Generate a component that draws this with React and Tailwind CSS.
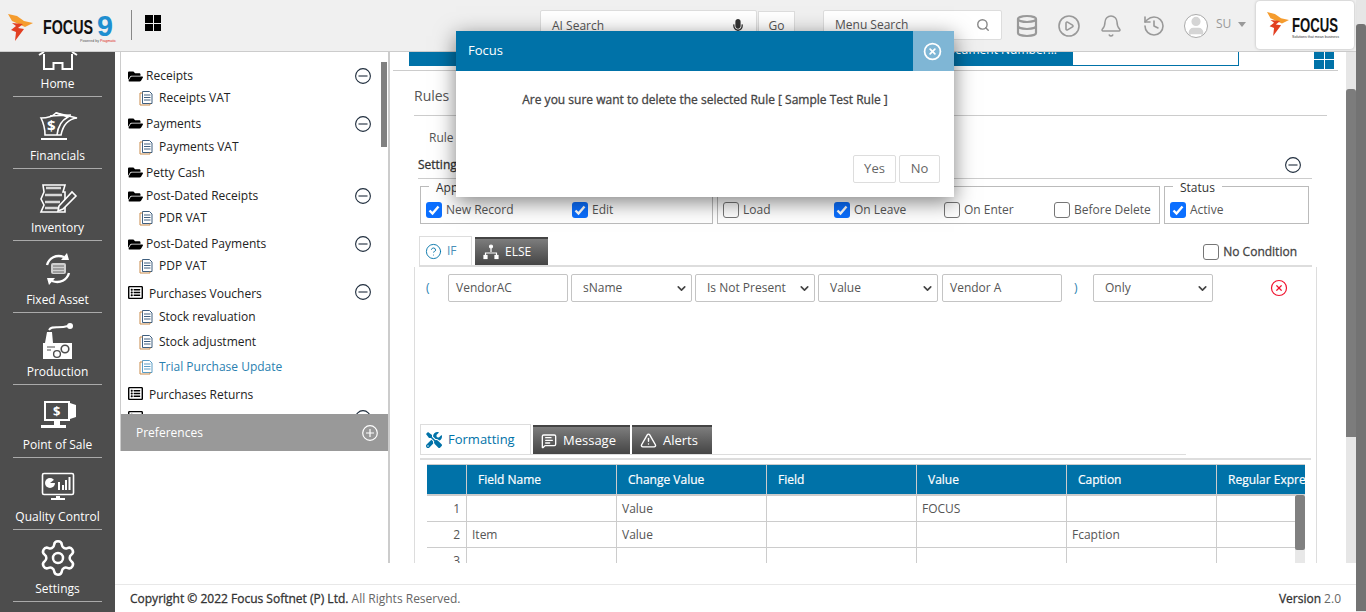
import {
  Bell,
  ChevronDown,
  CircleHelp,
  CirclePlay,
  CircleX,
  Database,
  History,
  MessageSquareText,
  Search,
  Settings,
  TriangleAlert,
  User,
} from "lucide-react";
import { FaFolderOpen, FaMicrophone, FaRegListAlt, FaTools } from "react-icons/fa";

// SIDEBAR ICONS
const HomeIcon = () => (
  <svg width="40" height="36" viewBox="0 0 40 36" fill="none" stroke="white" strokeWidth="2">
    <path d="M6 19V34H15.5V28H24.5V34H34V19" />
    <path d="M1 20L6 17M39 20L34 17" />
  </svg>
);

const FinancialsIcon = () => (
  <svg width="40" height="36" viewBox="0 0 40 36" fill="none" stroke="white" strokeWidth="1.6">
    <path d="M3 11C9 11 14 10 18 6L39 11C30 12 25 18 23 28H7C7 20 5 15 3 11Z" />
    <path d="M18 6L30 10C24 13 20 19 19 28M12 9L33 8" />
    <rect x="3" y="31" width="26" height="2" fill="white" stroke="none" />
    <text x="9" y="24" fontSize="15" fontWeight="700" fill="white" stroke="none" fontFamily="Open Sans">
      $
    </text>
  </svg>
);

const InventoryIcon = () => (
  <svg width="40" height="36" viewBox="0 0 40 36" fill="none" stroke="white" strokeWidth="1.6">
    <path d="M5 6H27L25 13H27V20L25 26H27V33H3L6 26L3 20L6 13Z" />
    <path d="M8 9H23M7 16H24M7 23H22M7 29H24" strokeWidth="2.4" stroke="#d8d8d8" />
    <path d="M21 27L34 13L38 17L25 30L20 32Z" fill="#4d4d4d" />
  </svg>
);

const FixedAssetIcon = () => (
  <svg width="40" height="36" viewBox="0 0 40 36" fill="none" stroke="white">
    <path d="M9 14C11 7 18 3 26 6" strokeWidth="2.4" />
    <path d="M29 2L31 9L23 9Z" fill="white" stroke="none" />
    <path d="M31 22C29 29 22 33 14 30" strokeWidth="2.4" />
    <path d="M11 34L9 27L17 27Z" fill="white" stroke="none" />
    <rect x="13" y="12" width="15" height="11" rx="2" fill="#cfcfcf" stroke="none" />
    <path d="M15 15H26M15 18H26M15 21H26" stroke="#6b6b6b" strokeWidth="1" />
  </svg>
);

const ProductionIcon = () => (
  <svg width="40" height="36" viewBox="0 0 40 36" fill="none">
    <path d="M5 36V20H7L9 9H14L15 20H34V36Z" fill="white" />
    <path d="M11 7C14 2 20 6 30 3" stroke="white" strokeWidth="2" />
    <circle cx="32" cy="3" r="3" fill="white" />
    <circle cx="19" cy="31" r="3.4" fill="white" stroke="#4d4d4d" strokeWidth="1.4" />
    <circle cx="27" cy="26" r="3.8" fill="white" stroke="#4d4d4d" strokeWidth="1.6" />
    <path d="M9 24H17M9 27H13" stroke="#4d4d4d" strokeWidth="1" />
  </svg>
);

const PointOfSaleIcon = () => (
  <svg width="40" height="36" viewBox="0 0 40 36" fill="none">
    <rect x="7" y="6" width="24" height="18" fill="none" stroke="white" strokeWidth="2" />
    <path d="M32 7L38 9V21L32 23Z" fill="white" />
    <path d="M16 25H22V29H28V32H3V29H16Z" fill="white" />
    <text x="15" y="20" fontSize="13" fontWeight="700" fill="white" fontFamily="Open Sans">
      $
    </text>
  </svg>
);

const QualityIcon = () => (
  <svg width="40" height="36" viewBox="0 0 40 36" fill="none">
    <rect x="4.5" y="5.5" width="31" height="21" rx="1.5" stroke="white" strokeWidth="1.6" />
    <circle cx="12" cy="15" r="5" fill="white" />
    <path d="M12 15H17V11Z" fill="#4d4d4d" />
    <path d="M20 14H22V22H20ZM24 17H26V22H24ZM27 12H29V22H27ZM30.5 9H32.5V22H30.5Z" fill="white" />
    <path d="M18 28H22V30H27V32H13V30H18Z" fill="white" />
  </svg>
);

const sideItems = [
  { label: "Home", icon: <HomeIcon /> },
  { label: "Financials", icon: <FinancialsIcon /> },
  { label: "Inventory", icon: <InventoryIcon /> },
  { label: "Fixed Asset", icon: <FixedAssetIcon /> },
  { label: "Production", icon: <ProductionIcon /> },
  { label: "Point of Sale", icon: <PointOfSaleIcon /> },
  { label: "Quality Control", icon: <QualityIcon /> },
  { label: "Settings", icon: <Settings size={40} strokeWidth={1.5} color="white" /> },
];

// LOGO MARK
const LogoMark = ({ w, h }) => (
  <svg width={w} height={h} viewBox="0 0 25 27">
    <path d="M0 0L9 2L16 7L25 9L17 13L4 7Z" fill="#f59c2e" />
    <path d="M4 9L15 10L10 14L16 15L7 27L8 18L3 16L8 12Z" fill="#e23f22" />
  </svg>
);

const MinusCircle = () => (
  <svg width="16" height="16" viewBox="0 0 16 16" fill="none" stroke="#1f2d3d" strokeWidth="1.1">
    <circle cx="8" cy="8" r="7.4" />
    <path d="M3.5 8H12.5" />
  </svg>
);

const DocIcon = ({ color = "#3f5f7f" }) => (
  <svg width="14" height="16" viewBox="0 0 14 16" fill="none" stroke={color} strokeWidth="1">
    <path d="M3.5 1.5H10.5L13 4V13.5H3.5Z" fill="white" />
    <path d="M5 5H11.5M5 7.5H11.5M5 10H11.5" />
    <path d="M3.5 3H1V15H11V13.5" stroke="#c98b4a" />
  </svg>
);

const treeRows = [
  { type: "folder", text: "Receipts", h: "h-[22px] pt-[2px]", minus: true },
  { type: "doc", text: "Receipts VAT", h: "h-[24px]" },
  { type: "folder", text: "Payments", h: "h-[25px] pt-[2px]", minus: true },
  { type: "doc", text: "Payments VAT", h: "h-[24px]" },
  { type: "folder", text: "Petty Cash", h: "h-[25px] pt-[2px]" },
  { type: "folder", text: "Post-Dated Receipts", h: "h-[22px] pt-[2px]", minus: true },
  { type: "doc", text: "PDR VAT", h: "h-[24px]" },
  { type: "folder", text: "Post-Dated Payments", h: "h-[24px] pt-[4px]", minus: true },
  { type: "doc", text: "PDP VAT", h: "h-[25px] pb-[2px]" },
  { type: "list", text: "Purchases Vouchers", h: "h-[26px]", minus: true },
  { type: "doc", text: "Stock revaluation", h: "h-[24px]" },
  { type: "doc", text: "Stock adjustment", h: "h-[25px]" },
  { type: "doc", text: "Trial Purchase Update", h: "h-[26px]", active: true },
  { type: "list", text: "Purchases Returns", h: "h-[26px]" },
  { type: "list", text: "", h: "h-[23px]", minus: true },
];

function TreeRow({ row }) {
  return (
    <div className={`flex items-center pr-[17px] ${row.h} ${row.active ? "text-[#2a7fb0]" : "text-[#222]"}`}>
      {row.type === "folder" && (
        <span className="flex items-center gap-[3px] pl-[7px]">
          <FaFolderOpen size={15} color="black" />
          {row.text}
        </span>
      )}
      {row.type === "list" && (
        <span className="flex items-center gap-[6px] pl-[7px]">
          <FaRegListAlt size={15} color="black" />
          <span className="pt-[4px]">{row.text}</span>
        </span>
      )}
      {row.type === "doc" && (
        <span className="flex items-center gap-[6px] pl-[18px]">
          <DocIcon color={row.active ? "#5b9cc4" : "#3f5f7f"} />
          {row.text}
        </span>
      )}
      {row.minus && (
        <span className="ml-auto">
          <MinusCircle />
        </span>
      )}
    </div>
  );
}

function Check({ label, checked, cell }) {
  return (
    <div className={`flex items-center gap-[4px] ${cell}`}>
      {checked ? (
        <span className="flex w-[16px] h-[16px] shrink-0 items-center justify-center rounded-[3px] bg-[#0b6fff]">
          <svg width="12" height="12" viewBox="0 0 12 12" fill="none" stroke="white" strokeWidth="2.4">
            <path d="M1.5 6.5L4.5 9.5L10.5 2.5" />
          </svg>
        </span>
      ) : (
        <span className="w-[16px] h-[16px] shrink-0 rounded-[3px] border border-[#767676] bg-white" />
      )}
      <span className="text-[#555]">{label}</span>
    </div>
  );
}

function Legend({ children, left }) {
  return (
    <span className={`absolute -top-[7px] ${left} bg-white px-[7px] leading-[16px] text-[#333]`}>{children}</span>
  );
}

function TextBox({ text, w = "w-[120px]" }) {
  return (
    <div className={`flex h-[28px] items-center rounded-[2px] border border-[#c4c4c4] pl-[7px] text-[#555] ${w}`}>
      {text}
    </div>
  );
}

function SelectBox({ text, w = "w-[120px]" }) {
  return (
    <div className={`flex h-[28px] items-center justify-between rounded-[2px] border border-[#c4c4c4] pl-[11px] pr-[3px] text-[#555] ${w}`}>
      {text}
      <ChevronDown size={13} strokeWidth={3} color="#444" />
    </div>
  );
}

function DarkTab({ w, h = "h-[28px]", icon, text }) {
  return (
    <div className={`flex items-center gap-[6px] border-t-2 border-[#444] bg-gradient-to-b from-[#7d7d7d] to-[#454545] pl-[8px] text-white ${w} ${h}`}>
      {icon}
      {text}
    </div>
  );
}

const columns = ["", "Field Name", "Change Value", "Field", "Value", "Caption", "Regular Expression"];
const rows = [
  ["1", "", "Value", "", "FOCUS", "", ""],
  ["2", "Item", "Value", "", "", "Fcaption", ""],
  ["3", "", "", "", "", "", ""],
];

export default function App() {
  return (
    <div className="relative flex h-[612px] w-[1366px] overflow-hidden bg-white font-['Open_Sans',sans-serif] text-[12px]">
      <div className="flex w-[1356px] flex-col">
        {/* HEADER */}
        <header className="relative z-10 flex h-[52px] shrink-0 items-start border-b border-[#ccc] bg-[#f0f0f0]">
          <div className="ml-[8px] mt-[14px]">
            <LogoMark w={25} h={27} />
          </div>
          <svg width="75" height="30" viewBox="0 0 75 30" className="ml-[10px] mt-[13px]">
            <text x="0" y="21" fontSize="21" fontWeight="700" fontFamily="Liberation Sans" textLength="50" lengthAdjust="spacingAndGlyphs" fill="#111">
              FOCUS
            </text>
            <text x="54" y="23" fontSize="29" fontWeight="700" fontFamily="Liberation Sans" textLength="16" lengthAdjust="spacingAndGlyphs" fill="#1f8fd0">
              9
            </text>
            <text x="37" y="28.5" fontSize="3.6" fontFamily="Liberation Sans" fill="#555">
              Powered by <tspan fill="#d22">Pragmatic</tspan>
            </text>
          </svg>
          <div className="ml-[13px] mt-[10px] h-[30px] w-px bg-[#888]" />
          <div className="ml-[13px] mt-[15px] grid h-[16px] w-[16px] grid-cols-2 gap-[1px]">
            <span className="bg-black" />
            <span className="bg-black" />
            <span className="bg-black" />
            <span className="bg-black" />
          </div>
          <div className="ml-[379px] mt-[10px] flex h-[31px] w-[217px] items-center justify-between rounded-t-[2px] border border-[#ddd] bg-white pl-[11px] pr-[11px] text-[#555]">
            AI Search
            <FaMicrophone size={14} color="#333" />
          </div>
          <div className="ml-[1px] mt-[11px] flex h-[30px] w-[37px] items-center justify-center border border-[#ddd] bg-white text-[#555]">
            Go
          </div>
          <div className="ml-[28px] mt-[10px] flex h-[30px] w-[179px] items-center justify-between rounded-[2px] border border-[#ddd] bg-white pl-[11px] pr-[11px] text-[#555]">
            Menu Search
            <Search size={14} color="#888" strokeWidth={2.4} />
          </div>
          <div className="ml-[13px] mt-[14px] flex items-center text-[#999]">
            <Database size={24} strokeWidth={2.2} />
            <CirclePlay size={24} strokeWidth={1.6} className="ml-[18px]" />
            <Bell size={24} strokeWidth={1.5} className="ml-[18px]" />
            <History size={24} strokeWidth={1.6} className="ml-[19px]" />
            <span className="ml-[18px] flex h-[24px] w-[24px] items-center justify-center overflow-hidden rounded-full border border-[#aaa] bg-white">
              <User size={24} fill="#d5d5d5" color="#d5d5d5" />
            </span>
            <span className="ml-[8px] -mt-[4px] text-[12px] text-[#999]">SU</span>
            <span className="ml-[7px] -mt-[4px] h-0 w-0 border-x-[4px] border-t-[5px] border-x-transparent border-t-[#999]" />
          </div>
          <div className="ml-[10px] mt-[1px] flex h-[48px] w-[98px] items-start rounded-[4px] bg-white pl-[11px] pt-[11px] shadow-[0_0_3px_rgba(0,0,0,0.25)]">
            <LogoMark w={22} h={24} />
            <svg width="50" height="30" viewBox="0 0 50 30" className="ml-[2px]">
              <text x="1" y="20" fontSize="21" fontWeight="700" fontFamily="Liberation Sans" textLength="46" lengthAdjust="spacingAndGlyphs" fill="#111">
                FOCUS
              </text>
              <text x="1" y="26" fontSize="3.6" fontFamily="Liberation Sans" fill="#333">
                Solutions that mean business
              </text>
            </svg>
          </div>
        </header>

        <div className="flex min-h-0 flex-1">
          {/* SIDEBAR */}
          <aside className="w-[115px] shrink-0 overflow-hidden bg-[#4d4d4d] text-white">
            <div className="-mt-[27.5px]">
              {sideItems.map((item) => (
                <div key={item.label} className="flex h-[72.2px] flex-col items-center justify-end">
                  <div className="flex h-[36px] items-center justify-center">{item.icon}</div>
                  <div className="mt-[6px] flex h-[20px] w-[89px] items-start justify-center border-b border-[#aaa] leading-[14px]">
                    {item.label}
                  </div>
                </div>
              ))}
            </div>
          </aside>

          <div className="flex min-w-0 flex-1 flex-col">
            <div className="flex h-[511px] shrink-0">
              {/* TREE PANEL */}
              <div className="w-[275px] shrink-0 border-r-2 border-[#ccc] pl-[5px]">
                <div className="h-[399px] border-l border-[#ccc]">
                  <div className="relative h-[362px] overflow-hidden pt-[12px]">
                    {treeRows.map((row, idx) => (
                      <TreeRow key={idx} row={row} />
                    ))}
                    <div className="absolute right-[1px] top-[10px] h-[85px] w-[6px] bg-[#808080]" />
                  </div>
                  <div className="flex h-[37px] items-center justify-between bg-[#999] pl-[15px] pr-[10px] text-white">
                    Preferences
                    <svg width="16" height="16" viewBox="0 0 16 16" fill="none" stroke="white" strokeWidth="1.2">
                      <circle cx="8" cy="8" r="7.3" />
                      <path d="M4 8H12M8 4V12" />
                    </svg>
                  </div>
                </div>
              </div>

              {/* MAIN */}
              <main className="w-[956px] shrink-0 overflow-hidden">
                <div className="ml-[3px] flex h-[19px] w-[945px] items-start border-b border-[#ccc] pl-[16px] pr-[4px]">
                  <div className="-mt-[10px] h-[24px] w-[663px] bg-[#0072a8] pr-[15px] text-right leading-[16px] text-white">
                    Document Number...
                  </div>
                  <div className="h-[14px] w-[167px] border border-t-0 border-[#0072a8]" />
                  <div className="ml-auto grid h-[17px] w-[20px] grid-cols-2 content-end gap-[1px]">
                    <span className="h-[7px] bg-[#0072a8]" />
                    <span className="h-[7px] bg-[#0072a8]" />
                    <span className="h-[9px] bg-[#0072a8]" />
                    <span className="h-[9px] bg-[#0072a8]" />
                  </div>
                </div>

                <div className="ml-[24px] flex h-[45px] w-[913px] items-center border-b border-[#ccc] pt-[4px] text-[14px] text-[#555]">
                  Rules
                </div>
                <div className="ml-[39px] flex h-[43px] items-center text-[#555]">Rule</div>
                <div className="ml-[28px] flex h-[20px] w-[894px] items-center justify-between border-b border-[#ccc] pb-[7px] pr-[11px] font-medium text-[#333] [-webkit-text-stroke:0.3px_currentColor]">
                  Settings
                  <MinusCircle />
                </div>

                {/* FIELD GROUPS */}
                <div className="ml-[30px] mt-[7px] flex gap-[4px]">
                  <div className="relative flex h-[38px] w-[293px] items-end border border-[#bbb] pb-[4px] pl-[5px]">
                    <Legend left="left-[8px]">Applicable</Legend>
                    <Check label="New Record" checked cell="w-[146px]" />
                    <Check label="Edit" checked cell="w-[100px]" />
                  </div>
                  <div className="relative flex h-[38px] w-[443px] items-end border border-[#bbb] pb-[4px] pl-[5px]">
                    <Check label="Load" cell="w-[111px]" />
                    <Check label="On Leave" checked cell="w-[110px]" />
                    <Check label="On Enter" cell="w-[110px]" />
                    <Check label="Before Delete" cell="w-[105px]" />
                  </div>
                  <div className="relative flex h-[38px] w-[145px] items-end border border-[#bbb] pb-[4px] pl-[5px]">
                    <Legend left="left-[8px]">Status</Legend>
                    <Check label="Active" checked cell="w-[100px]" />
                  </div>
                </div>

                {/* IF / ELSE */}
                <div className="ml-[29px] mt-[13px] flex h-[30px] w-[893px] items-end border-b-2 border-[#ddd]">
                  <div className="flex h-[29px] w-[53px] items-center gap-[5px] border border-b-0 border-[#ddd] pl-[5px] text-[#4a8fb8]">
                    <CircleHelp size={17} strokeWidth={1.3} color="#0072a8" />
                    IF
                  </div>
                  <div className="ml-[3px]">
                    <DarkTab
                      w="w-[73px]"
                      text="ELSE"
                      icon={
                        <svg width="16" height="16" viewBox="0 0 16 16" fill="none" stroke="white" strokeWidth="1.2">
                          <circle cx="8" cy="2.5" r="1.5" fill="white" />
                          <path d="M8 4V8M2.5 12V9H13.5V12" />
                          <rect x="1" y="11.5" width="3" height="3" fill="white" />
                          <rect x="12" y="11.5" width="3" height="3" fill="white" />
                        </svg>
                      }
                    />
                  </div>
                  <div className="ml-auto mb-[4px] mr-[15px] flex items-center gap-[4px] font-medium text-[#444] [-webkit-text-stroke:0.3px_currentColor]">
                    <span className="h-[16px] w-[16px] rounded-[3px] border border-[#767676]" />
                    No Condition
                  </div>
                </div>

                {/* CONDITION PANEL */}
                <div className="ml-[24px] h-[300px] w-[903px] border-x border-[#ddd]">
                  <div className="flex h-[158px] items-start pl-[11px] pt-[7px]">
                    <div className="flex h-[28px] w-[22px] items-center text-[#2a7fb0]">(</div>
                    <div className="flex gap-[3px]">
                      <TextBox text="VendorAC" />
                      <SelectBox text="sName" w="w-[121px]" />
                      <SelectBox text="Is Not Present" />
                      <SelectBox text="Value" />
                      <div className="ml-[1px]">
                        <TextBox text="Vendor A" />
                      </div>
                    </div>
                    <div className="flex h-[28px] w-[31px] items-center pl-[12px] text-[#2a7fb0]">)</div>
                    <SelectBox text="Only" />
                    <div className="ml-[57px] flex h-[28px] items-center">
                      <CircleX size={18} strokeWidth={1.6} color="#f0142f" />
                    </div>
                  </div>

                  {/* FORMATTING TABS */}
                  <div className="ml-[5px] flex h-[30px] w-[766px] items-end border-b border-[#ddd] text-[13px]">
                    <div className="flex h-[30px] w-[111px] items-center gap-[6px] border border-b-0 border-[#ddd] bg-white pl-[5px] text-[#0072a8]">
                      <FaTools size={16} color="#0072a8" />
                      Formatting
                    </div>
                    <div className="ml-[2px]">
                      <DarkTab w="w-[97px]" h="h-[29px]" text="Message" icon={<MessageSquareText size={16} strokeWidth={2} color="white" />} />
                    </div>
                    <div className="ml-[2px]">
                      <DarkTab w="w-[80px]" h="h-[29px]" text="Alerts" icon={<TriangleAlert size={17} strokeWidth={2} color="white" />} />
                    </div>
                  </div>
                  <div className="ml-[5px] mt-[3px] h-[2px] w-[891px] bg-[#ddd]" />

                  {/* TABLE */}
                  <div className="relative ml-[12px] mt-[4px] w-[878px] overflow-hidden border-t border-[#ccc]">
                    <div className="grid h-[31px] w-[1100px] grid-cols-[40px_150px_150px_150px_150px_150px_150px_150px] border-b-2 border-[#ccc] bg-[#0072a8] font-medium text-white [-webkit-text-stroke:0.2px_currentColor]">
                      {columns.map((col) => (
                        <div key={col} className="flex items-center whitespace-nowrap border-r border-[#ccc] pl-[11px]">
                          {col}
                        </div>
                      ))}
                    </div>
                    {rows.map((row) => (
                      <div key={row[0]} className="grid h-[26px] w-[1100px] grid-cols-[40px_150px_150px_150px_150px_150px_150px_150px] border-b border-[#ccc] text-[#555]">
                        {row.map((cell, idx) => (
                          <div key={idx} className={`flex items-center border-r border-[#ccc] ${idx === 0 ? "justify-end pr-[6px] font-medium" : "pl-[5px]"}`}>
                            {cell}
                          </div>
                        ))}
                      </div>
                    ))}
                    <div className="absolute right-0 top-[30px] h-[68px] w-[10px] bg-[#e8e8e8]">
                      <div className="h-[55px] rounded-[2px] bg-[#808080]" />
                    </div>
                  </div>
                </div>
              </main>

              {/* MAIN SCROLLBAR */}
              <div className="w-[10px] shrink-0 bg-[#e6e6e6]">
                <div className="mt-[37px] h-[348px] rounded-t-[3px] bg-[#7c7c7c]" />
              </div>
            </div>

            <div className="h-[21px] shrink-0" />

            {/* FOOTER */}
            <footer className="flex h-[28px] shrink-0 items-center justify-between border-t border-[#e8e8e8] pl-[15px] pr-[15px] text-[#666]">
              <span>
                <span className="font-medium text-[#333] [-webkit-text-stroke:0.3px_currentColor]">Copyright © 2022 Focus Softnet (P) Ltd.</span> All Rights Reserved.
              </span>
              <span>
                <span className="font-medium text-[#333] [-webkit-text-stroke:0.3px_currentColor]">Version</span> 2.0
              </span>
            </footer>
          </div>
        </div>
      </div>

      {/* WINDOW SCROLLBAR */}
      <div className="w-[10px] shrink-0 bg-[#e6e6e6]">
        <div className="mt-[24px] h-[587px] rounded-t-[3px] bg-[#737373]" />
      </div>

      {/* DIALOG */}
      <div className="absolute left-[456px] top-[31px] z-20 h-[166px] w-[498px] bg-white shadow-[0_5px_20px_rgba(0,0,0,0.5)]">
        <div className="flex h-[40px] items-center justify-between bg-[#0072a8] pl-[12px] text-[13px] text-white">
          Focus
          <div className="flex h-[40px] w-[41px] items-center justify-center bg-[#7fb6d5] pr-[3px]">
            <CircleX size={19} strokeWidth={2.2} color="white" />
          </div>
        </div>
        <div className="pt-[20px] text-center font-medium text-[#444] [-webkit-text-stroke:0.3px_currentColor]">
          Are you sure want to delete the selected Rule [ Sample Test Rule ]
        </div>
        <div className="mr-[14px] mt-[38px] flex justify-end gap-[3px] pt-[8px] text-[#666]">
          <div className="flex h-[28px] w-[43px] items-center justify-center rounded-[2px] border border-[#ddd] text-[13px]">Yes</div>
          <div className="flex h-[28px] w-[41px] items-center justify-center rounded-[2px] border border-[#ddd] text-[13px]">No</div>
        </div>
      </div>
    </div>
  );
}
